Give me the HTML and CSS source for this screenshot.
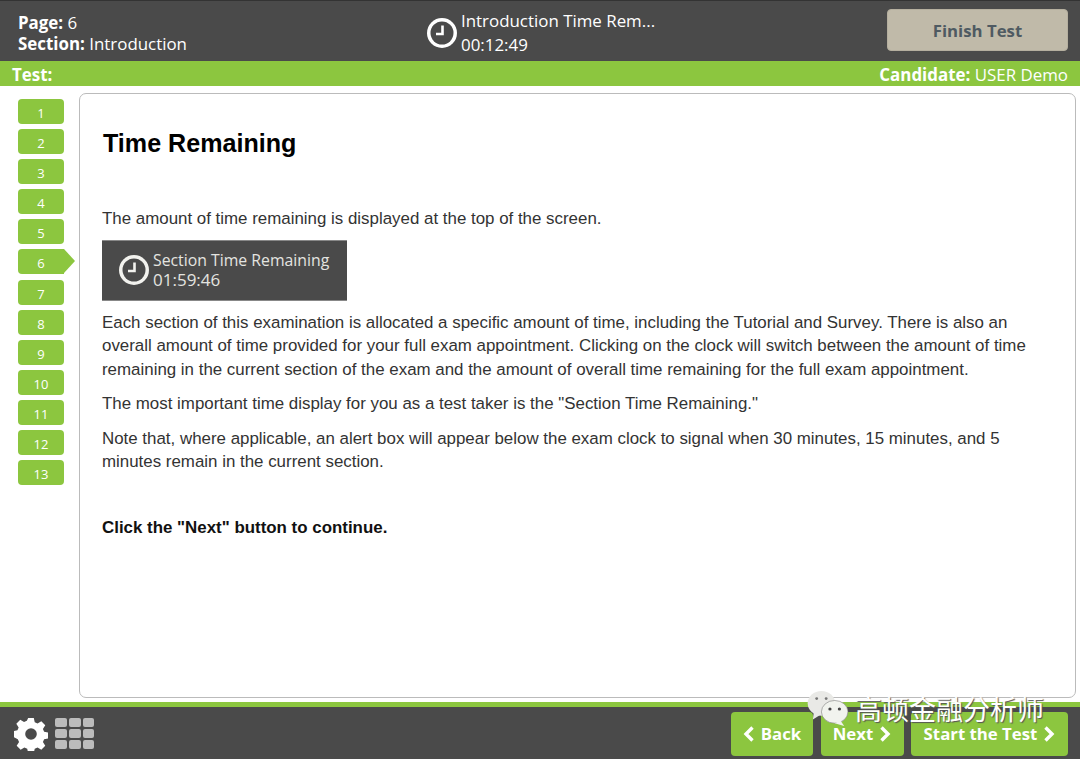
FILE: index.html
```html
<!DOCTYPE html>
<html lang="en">
<head>
    <meta charset="UTF-8">
    <meta name="viewport" content="width=device-width, initial-scale=1.0">
    <title>Time Remaining</title>
    <link rel="stylesheet" href="styles.css">
</head>
<body>
    <header class="top-bar">
        <div class="page-info">
            <div><strong>Page:</strong> 6</div>
            <div><strong>Section:</strong> Introduction</div>
        </div>
        <div class="clock">
            <svg class="clock-icon" viewBox="0 0 30 30" width="30" height="30">
                <circle cx="15" cy="15" r="15" fill="#fff"/>
                <circle cx="15" cy="15" r="11.5" fill="#4a4a4a"/>
                <path d="M15.5 7.500v8.500H9" fill="none" stroke="#fff" stroke-width="2.600"/>
            </svg>
            <div class="clock-text">
                <div>Introduction Time Rem...</div>
                <div>00:12:49</div>
            </div>
        </div>
        <button class="finish-btn">Finish Test</button>
    </header>

    <div class="info-bar">
        <strong>Test:</strong>
        <span><strong>Candidate:</strong> USER Demo</span>
    </div>

    <div class="content-wrap">
        <nav class="page-nav">
            <a class="page-item">1</a>
            <a class="page-item">2</a>
            <a class="page-item">3</a>
            <a class="page-item">4</a>
            <a class="page-item">5</a>
            <a class="page-item current">6</a>
            <a class="page-item">7</a>
            <a class="page-item">8</a>
            <a class="page-item">9</a>
            <a class="page-item">10</a>
            <a class="page-item">11</a>
            <a class="page-item">12</a>
            <a class="page-item">13</a>
        </nav>

        <main class="panel">
            <h1>Time Remaining</h1>
            <p class="intro">The amount of time remaining is displayed at the top of the screen.</p>
            <div class="clock-sample">
                <svg viewBox="0 0 30 30" width="30" height="30">
                    <circle cx="15" cy="15" r="15" fill="#f2f2ee"/>
                    <circle cx="15" cy="15" r="11.500" fill="#4a4a4a"/>
                    <path d="M15.500 7.500v8.500H9" fill="none" stroke="#f2f2ee" stroke-width="2.600"/>
                </svg>
                <div class="sample-text">
                    <div>Section Time Remaining</div>
                    <div class="sample-time">01:59:46</div>
                </div>
            </div>
            <p>Each section of this examination is allocated a specific amount of time, including the Tutorial and Survey. There is also an overall amount of time provided for your full exam appointment. Clicking on the clock will switch between the amount of time remaining in the current section of the exam and the amount of overall time remaining for the full exam appointment.</p>
            <p>The most important time display for you as a test taker is the "Section Time Remaining."</p>
            <p>Note that, where applicable, an alert box will appear below the exam clock to signal when 30 minutes, 15 minutes, and 5 minutes remain in the current section.</p>
            <p class="next-note">Click the "Next" button to continue.</p>
        </main>
    </div>

    <footer class="bottom-bar">
        <div class="tools">
            <svg viewBox="0 0 34 34" width="34" height="34">
                <path fill="#fff" d="M14 0h6l1 4.600 3 1.300 4-2.500 4.200 4.200-2.500 4 1.300 3 4.600 1v6l-4.600 1-1.300 3 2.500 4-4.200 4.200-4-2.500-3 1.300-1 4.600h-6l-1-4.600-3-1.300-4 2.500-4.200-4.200 2.500-4-1.300-3L-2 20v-6l4.600-1 1.300-3-2.500-4L5.600 1.800l4 2.500 3-1.300z" transform="translate(1 1) scale(.94)"/>
                <circle cx="17" cy="17" r="5.800" fill="#4a4a4a"/>
            </svg>
            <div class="grid-icon">
                <span></span><span></span><span></span>
                <span></span><span></span><span></span>
                <span></span><span></span><span></span>
            </div>
        </div>
        <div class="nav-btns">
            <button class="nav-btn back">
                <svg viewBox="0 0 12 18" width="12" height="18"><path d="M9.500 2.500 3 9l6.500 6.500" fill="none" stroke="#fff" stroke-width="3.400"/></svg>
                Back
            </button>
            <button class="nav-btn next">
                Next
                <svg viewBox="0 0 12 18" width="12" height="18"><path d="M2.500 2.500 9 9l-6.500 6.500" fill="none" stroke="#fff" stroke-width="3.400"/></svg>
            </button>
            <button class="nav-btn start">
                Start the Test
                <svg viewBox="0 0 12 18" width="12" height="18"><path d="M2.500 2.500 9 9l-6.500 6.500" fill="none" stroke="#fff" stroke-width="3.400"/></svg>
            </button>
        </div>
    </footer>

    <!-- watermark sits over the footer -->
    <div class="watermark">
        <svg viewBox="0 0 46 38" width="44" height="36">
            <ellipse cx="15" cy="13" rx="14.500" ry="13" fill="#e9e9e6"/>
            <path d="M7 22l-1 8 8-5z" fill="#e9e9e6"/>
            <ellipse cx="29" cy="22" rx="14" ry="12" fill="#f1f3ee" stroke="#777" stroke-width=".6"/>
            <path d="M35 31l4 6-10-3z" fill="#f1f3ee"/>
            <circle cx="10" cy="8" r="1.500" fill="#777"/>
            <circle cx="20" cy="8" r="1.500" fill="#777"/>
            <circle cx="24" cy="19" r="1.700" fill="#444"/>
            <circle cx="34" cy="19" r="1.700" fill="#444"/>
        </svg>
        <span>高顿金融分析师</span>
    </div>
</body>
</html>
```

FILE: styles.css
```css
* {
    margin: 0;
    padding: 0;
    box-sizing: border-box;
}

html, body {
    height: 759px;
    overflow: hidden;
}

body {
    position: relative;
    display: flex;
    flex-direction: column;
    background: #fff;
    font-family: 'Open Sans', sans-serif;
    color: #fff;
}

.top-bar {
    display: flex;
    align-items: center;
    height: 61px;
    flex: none;
    padding-left: 18px;
    background: #4a4a4a;
    border-top: 1px solid #333;
}

.page-info {
    width: 409px;
    padding-top: 3px;
    font-size: 16.900px;
    line-height: 21px;
}

.clock {
    display: flex;
    align-items: center;
    width: 460px;
    font-size: 16.900px;
    line-height: 23.500px;
}

.clock-icon {
    margin-right: 4px;
    margin-top: 4px;
}

.clock-text {
    padding-top: 3px;
}

.finish-btn {
    width: 181px;
    height: 42px;
    margin-top: -2px;
    background: #c0baa9;
    color: #4f5a62;
    border: 1px solid #b5af9f;
    border-radius: 4px;
    font-family: 'Open Sans', sans-serif;
    font-size: 16.800px;
    font-weight: 700;
}

.info-bar {
    display: flex;
    justify-content: space-between;
    align-items: center;
    height: 25px;
    flex: none;
    padding: 1px 12px 0;
    background: #8cc63f;
    font-size: 16.900px;
}

.content-wrap {
    display: flex;
    height: 616px;
    flex: none;
}

.page-nav {
    display: flex;
    flex-direction: column;
    gap: 5.100px;
    width: 79px;
    padding: 13px 0 0 18px;
}

.page-item {
    position: relative;
    display: block;
    width: 46px;
    height: 25px;
    padding-top: 3px;
    background: #8cc63f;
    border-radius: 4px;
    font-size: 13px;
    line-height: 22px;
    text-align: center;
}

.page-item.current {
    border-radius: 4px 0 0 4px;
}

.page-item.current::after {
    content: "";
    position: absolute;
    top: 0;
    left: 46px;
    border-style: solid;
    border-width: 12.500px 0 12.500px 11px;
    border-color: transparent transparent transparent #8cc63f;
}

.panel {
    width: 997px;
    height: 605px;
    margin-top: 7px;
    padding: 0 22px;
    background: #fff;
    border: 1px solid #bbb;
    border-radius: 7px;
    font-family: 'Liberation Sans', Arial, sans-serif;
    font-size: 16.900px;
    line-height: 23.500px;
    color: #333;
}

.panel h1 {
    margin-top: 33px;
    padding-left: 1px;
    font-size: 25.100px;
    line-height: 32px;
    color: #000;
}

.panel p {
    margin-bottom: 11px;
}

.panel .intro {
    margin: 48px 0 9px;
}

.clock-sample {
    display: flex;
    align-items: center;
    width: 245px;
    height: 61px;
    margin-bottom: 10px;
    padding-left: 17px;
    background: #4a4a4a;
    border-top: 1px solid #888;
    border-bottom: 1px solid #888;
    color: #e4e4e0;
    font-family: 'Open Sans', sans-serif;
}

.sample-text {
    margin-left: 4px;
    font-size: 15.800px;
    line-height: 19px;
}

.sample-time {
    font-size: 17px;
}

.panel .next-note {
    margin-top: 42px;
    font-weight: 700;
    color: #111;
}

.bottom-bar {
    display: flex;
    justify-content: space-between;
    align-items: center;
    flex: 1;
    padding: 0 12px 0 14px;
    background: #4a4a4a;
    border-top: 5px solid #8cc63f;
}

.tools {
    display: flex;
    align-items: center;
    gap: 7px;
    margin-top: 1px;
}

.grid-icon {
    display: grid;
    grid-template-columns: repeat(3, 11.800px);
    grid-auto-rows: 9px;
    gap: 2px;
}

.grid-icon span {
    background: #bcbcbc;
    border-radius: 2px;
}

.nav-btns {
    display: flex;
    gap: 7.500px;
    margin-top: 1px;
}

.nav-btn {
    display: flex;
    align-items: center;
    justify-content: center;
    gap: 6px;
    height: 44px;
    background: #8cc63f;
    color: #fff;
    border: none;
    border-radius: 4px;
    font-family: 'Open Sans', sans-serif;
    font-size: 16.800px;
    font-weight: 700;
}

.back { width: 82px; }
.next { width: 83px; }
.start { width: 157px; }

.watermark {
    position: absolute;
    top: 690px;
    left: 807px;
    display: flex;
    align-items: center;
    gap: 4px;
    color: #fff;
    font-family: 'Noto Sans CJK SC', sans-serif;
    font-size: 27px;
    line-height: 38px;
    text-shadow: 1px 1px 1px #555;
}
```
